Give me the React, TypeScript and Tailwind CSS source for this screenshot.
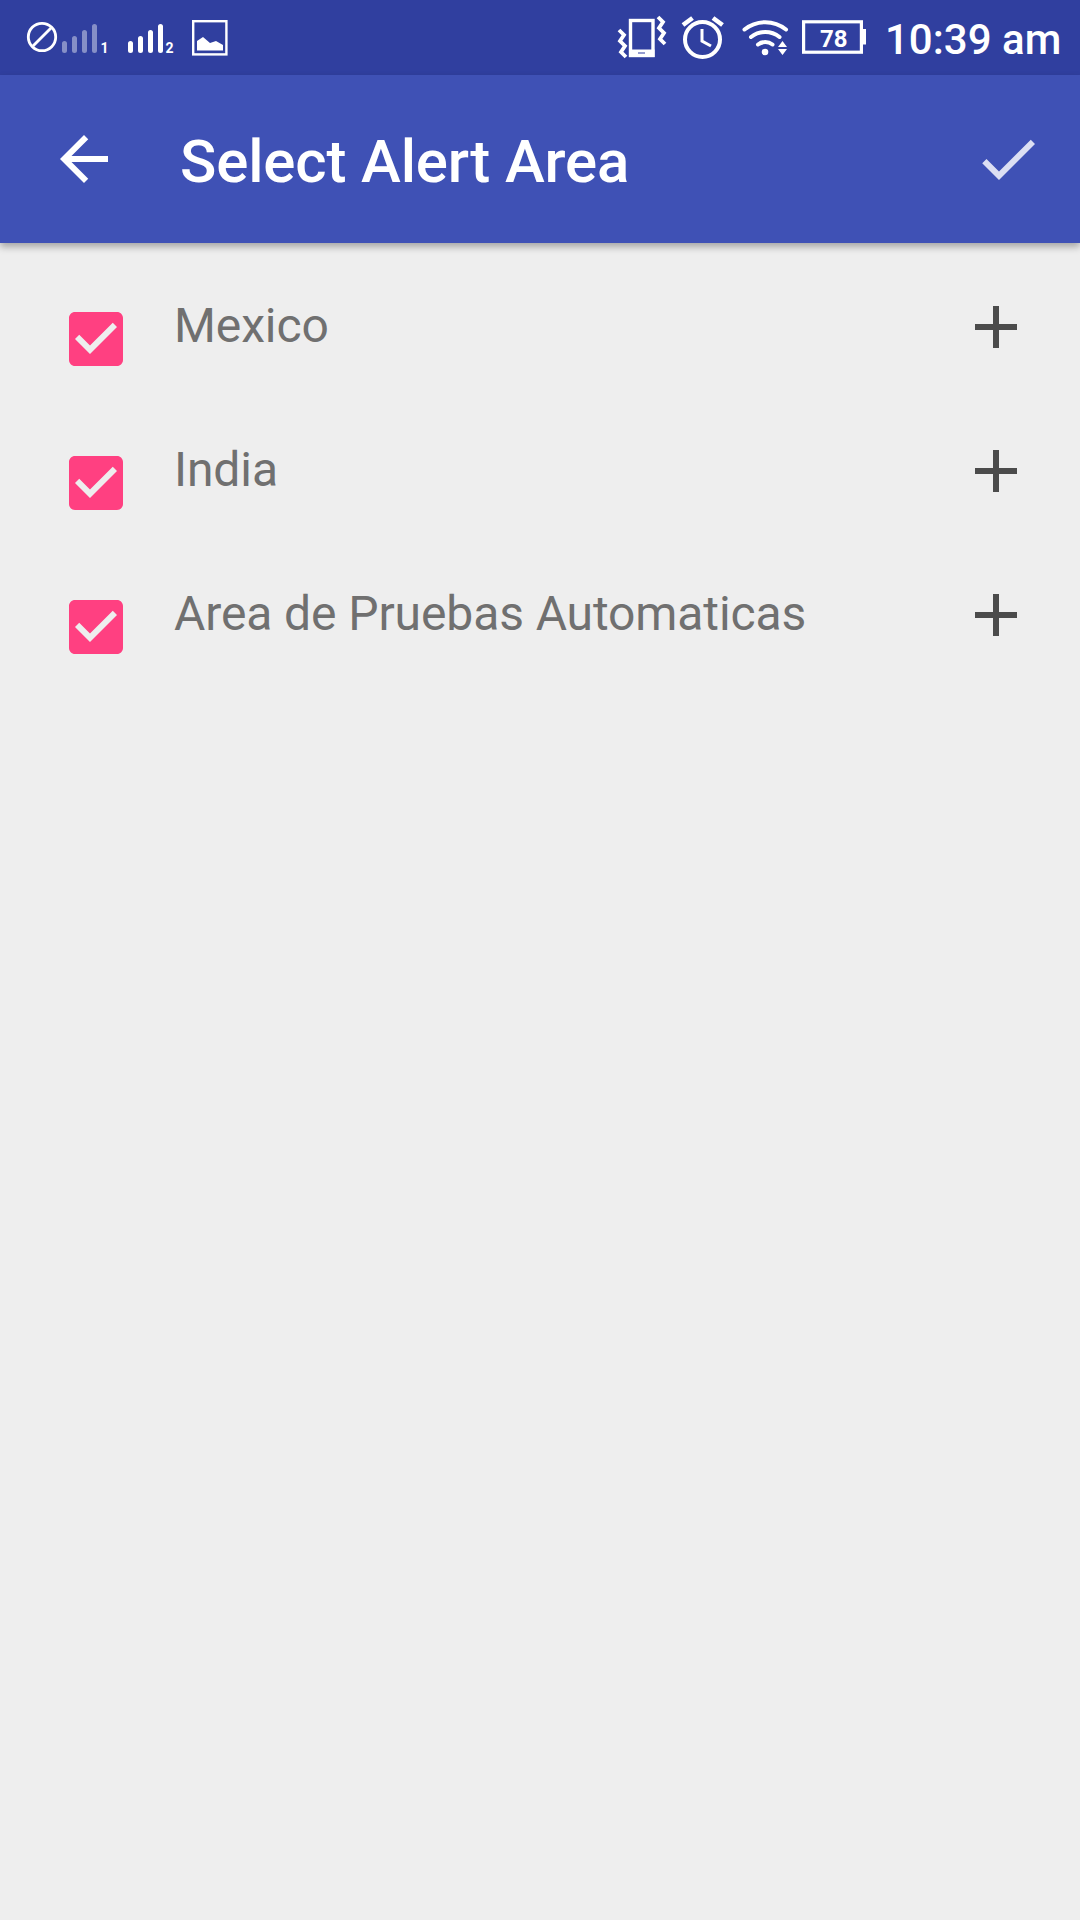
import { useState } from 'react';

const areas = [
  { id: 1, name: 'Mexico' },
  { id: 2, name: 'India' },
  { id: 3, name: 'Area de Pruebas Automaticas' },
];

function SignalBars({ x }: { x: number }) {
  return (
    <g stroke="currentColor" strokeWidth="5" strokeLinecap="round">
      <path d={`M${x} 43.5V50.5M${x + 10} 38.5V50.5M${x + 20} 32.5V50.5M${x + 30} 26.5V50.5`} />
    </g>
  );
}

function StatusBar() {
  return (
    <div className="flex h-[75px] justify-between bg-[#303f9f] text-white">
      <div className="flex">
        {/* SIM 1, no service */}
        <svg className="h-[75px] w-[120px]" viewBox="0 0 120 75" fill="none">
          <circle cx="42" cy="37" r="13.7" stroke="currentColor" strokeWidth="2.8" />
          <path d="M33 46L51 28" stroke="currentColor" strokeWidth="2.8" />
          <g opacity="0.42">
            <SignalBars x={64.5} />
          </g>
          <text x="100.5" y="53" fontSize="14" fontWeight="700" fill="currentColor" fontFamily="Roboto, sans-serif">1</text>
        </svg>
        {/* SIM 2 */}
        <svg className="h-[75px] w-[60px]" viewBox="120 0 60 75" fill="none">
          <SignalBars x={130.5} />
          <text x="165.5" y="53" fontSize="14" fontWeight="700" fill="currentColor" fontFamily="Roboto, sans-serif">2</text>
        </svg>
        <svg className="h-[75px] w-[60px]" viewBox="180 0 60 75" fill="none">
          <rect x="193.2" y="21.2" width="33.2" height="33.2" stroke="currentColor" strokeWidth="2.4" />
          <path d="M197 50.5V41l6-4 7 6 6-2 7 4v5.5z" fill="currentColor" />
        </svg>
      </div>

      <div className="flex">
        {/* Vibrate */}
        <svg className="h-[75px] w-[60px]" viewBox="612 0 60 75" fill="none">
          <rect x="630.5" y="20.5" width="22.5" height="35" stroke="currentColor" strokeWidth="3.4" />
          <path d="M629 49.5h25.5V57H629z" fill="currentColor" />
          <path d="M638 53h7" stroke="#7a84c4" strokeWidth="1.6" />
          <path d="M619 30l5 5-4 6 5 5-4 6 5 5M658 17l5 5-4 6 5 5-4 6 5 5" stroke="currentColor" strokeWidth="3.8" />
        </svg>
        {/* Alarm */}
        <svg className="h-[75px] w-[60px]" viewBox="672 0 60 75" fill="none">
          <circle cx="702.5" cy="39.5" r="17.5" stroke="currentColor" strokeWidth="4" />
          <path d="M702 29v12l9 5" stroke="currentColor" strokeWidth="3" />
          <path d="M683 25l9.5-7M713 18l9.5 7" stroke="currentColor" strokeWidth="4.6" />
        </svg>
        {/* Wi-Fi */}
        <svg className="h-[75px] w-[62px]" viewBox="732 0 62 75" fill="none">
          <g stroke="currentColor" strokeWidth="4" strokeLinecap="round">
            <path d="M744.5 29.5a33 33 0 0 1 41.5 0" />
            <path d="M751 37a23 23 0 0 1 28.5 0" />
            <path d="M758 44.5a12 12 0 0 1 14.5 0" />
          </g>
          <circle cx="765" cy="52" r="3.3" fill="currentColor" />
          <path d="M778 47l4.5-6 4.5 6zM778 49l4.5 6 4.5-6z" fill="currentColor" />
        </svg>
        {/* Battery */}
        <svg className="h-[75px] w-[91px]" viewBox="794 0 91 75" fill="none">
          <rect x="803.6" y="21.8" width="57.8" height="30.4" stroke="currentColor" strokeWidth="3.2" />
          <path d="M862 29h4v15.5h-4z" fill="currentColor" />
          <text x="820" y="46.7" fontSize="24" fontWeight="700" fill="currentColor" fontFamily="Roboto, sans-serif">78</text>
        </svg>
        <span className="w-[195px] pt-0.5 text-[42px] leading-[76px] font-medium whitespace-nowrap">10:39 am</span>
      </div>
    </div>
  );
}

function AppBar() {
  return (
    <header className="flex h-[168px] items-center bg-[#3f51b5] pl-12 shadow-[0_4px_7px_rgba(0,0,0,0.3)]">
      <button aria-label="Back">
        <svg className="size-[72px] text-white" viewBox="0 0 24 24" fill="currentColor">
          <path d="M20 11H7.83l5.59-5.59L12 4l-8 8 8 8 1.41-1.41L7.83 13H20v-2z" />
        </svg>
      </button>
      <h1 className="ml-[60px] flex-1 pt-1.5 text-[60px] leading-[70px] font-medium tracking-[-0.15px] text-white">
        Select Alert Area
      </h1>
      <button aria-label="Done" className="mr-9">
        <svg className="size-[72px] text-[#dcdff3]" viewBox="0 0 24 24" fill="currentColor">
          <path d="M9 16.17L4.83 12l-1.42 1.41L9 19 21 7l-1.41-1.41z" />
        </svg>
      </button>
    </header>
  );
}

export default function App() {
  const [selected, setSelected] = useState([1, 2, 3]);

  const toggle = (id: number) =>
    setSelected((prev) => (prev.includes(id) ? prev.filter((v) => v !== id) : [...prev, id]));

  return (
    <div className="flex h-[1920px] w-[1080px] flex-col bg-[#eeeeee] font-['Roboto',sans-serif]">
      <StatusBar />
      <AppBar />

      <ul className="pt-3">
        {areas.map((area) => (
          <li key={area.id} className="flex h-36 items-start pl-[60px]">
            <button aria-label={area.name} onClick={() => toggle(area.id)} className="mt-12">
              <svg className="size-[72px] text-[#ff4081]" viewBox="0 0 24 24" fill="currentColor">
                {selected.includes(area.id) ? (
                  <path d="M19 3H5c-1.11 0-2 .9-2 2v14c0 1.1.89 2 2 2h14c1.11 0 2-.9 2-2V5c0-1.1-.89-2-2-2zm-9 14l-5-5 1.41-1.41L10 14.17l7.59-7.59L19 8l-9 9z" />
                ) : (
                  <path d="M19 5v14H5V5h14m0-2H5c-1.1 0-2 .9-2 2v14c0 1.1.9 2 2 2h14c1.1 0 2-.9 2-2V5c0-1.1-.9-2-2-2z" />
                )}
              </svg>
            </button>
            <span className="mt-[43px] ml-[42px] flex-1 text-[48px] leading-[56px] tracking-[-0.1px] text-[#707070]">
              {area.name}
            </span>
            <button aria-label="Expand" className="mt-9 mr-12">
              <svg className="size-[72px] text-[#4b4b4b]" viewBox="0 0 24 24" fill="currentColor">
                <path d="M19 13h-6v6h-2v-6H5v-2h6V5h2v6h6v2z" />
              </svg>
            </button>
          </li>
        ))}
      </ul>
    </div>
  );
}
